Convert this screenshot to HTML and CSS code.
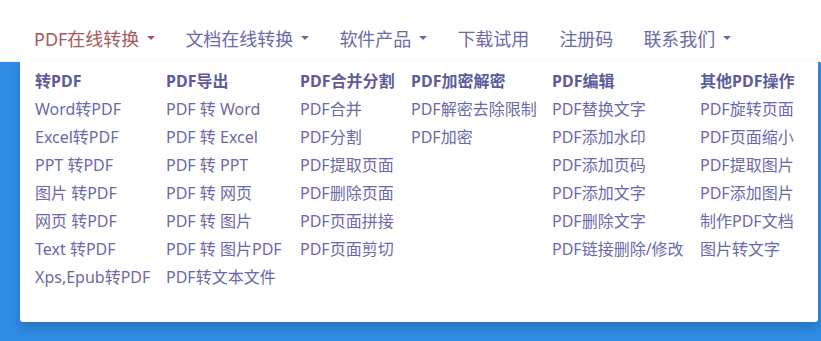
FILE: index.html
```html
<!DOCTYPE html>
<html lang="zh-CN">
<head>
    <meta charset="UTF-8">
    <meta name="viewport" content="width=device-width, initial-scale=1.0">
    <title>PDF在线转换</title>
    <link rel="stylesheet" href="styles.css">
</head>
<body>
    <header class="navbar">
        <ul class="nav">
            <li class="nav-item active open">
                <a href="#">PDF在线转换<span class="caret"></span></a>
                <div class="mega-menu">
                    <ul class="menu-col">
                        <li class="menu-head">转PDF</li>
                        <li><a href="#">Word转PDF</a></li>
                        <li><a href="#">Excel转PDF</a></li>
                        <li><a href="#">PPT 转PDF</a></li>
                        <li><a href="#">图片 转PDF</a></li>
                        <li><a href="#">网页 转PDF</a></li>
                        <li><a href="#">Text 转PDF</a></li>
                        <li><a href="#">Xps,Epub转PDF</a></li>
                    </ul>
                    <ul class="menu-col">
                        <li class="menu-head">PDF导出</li>
                        <li><a href="#">PDF 转 Word</a></li>
                        <li><a href="#">PDF 转 Excel</a></li>
                        <li><a href="#">PDF 转 PPT</a></li>
                        <li><a href="#">PDF 转 网页</a></li>
                        <li><a href="#">PDF 转 图片</a></li>
                        <li><a href="#">PDF 转 图片PDF</a></li>
                        <li><a href="#">PDF转文本文件</a></li>
                    </ul>
                    <ul class="menu-col">
                        <li class="menu-head">PDF合并分割</li>
                        <li><a href="#">PDF合并</a></li>
                        <li><a href="#">PDF分割</a></li>
                        <li><a href="#">PDF提取页面</a></li>
                        <li><a href="#">PDF删除页面</a></li>
                        <li><a href="#">PDF页面拼接</a></li>
                        <li><a href="#">PDF页面剪切</a></li>
                    </ul>
                    <ul class="menu-col">
                        <li class="menu-head">PDF加密解密</li>
                        <li><a href="#">PDF解密去除限制</a></li>
                        <li><a href="#">PDF加密</a></li>
                    </ul>
                    <ul class="menu-col">
                        <li class="menu-head">PDF编辑</li>
                        <li><a href="#">PDF替换文字</a></li>
                        <li><a href="#">PDF添加水印</a></li>
                        <li><a href="#">PDF添加页码</a></li>
                        <li><a href="#">PDF添加文字</a></li>
                        <li><a href="#">PDF删除文字</a></li>
                        <li><a href="#">PDF链接删除/修改</a></li>
                    </ul>
                    <ul class="menu-col">
                        <li class="menu-head">其他PDF操作</li>
                        <li><a href="#">PDF旋转页面</a></li>
                        <li><a href="#">PDF页面缩小</a></li>
                        <li><a href="#">PDF提取图片</a></li>
                        <li><a href="#">PDF添加图片</a></li>
                        <li><a href="#">制作PDF文档</a></li>
                        <li><a href="#">图片转文字</a></li>
                    </ul>
                </div>
            </li>
            <li class="nav-item"><a href="#">文档在线转换<span class="caret"></span></a></li>
            <li class="nav-item"><a href="#">软件产品<span class="caret"></span></a></li>
            <li class="nav-item"><a href="#">下载试用</a></li>
            <li class="nav-item"><a href="#">注册码</a></li>
            <li class="nav-item"><a href="#">联系我们<span class="caret"></span></a></li>
        </ul>
    </header>

    <section class="hero"></section>
</body>
</html>
```

FILE: styles.css
```css
:root {
    --link: #6a6aa9;
    --head: #5c5c9c;
    --active: #a55b5b;
    --hero: #2f8ce5;
}

* {
    margin: 0;
    padding: 0;
    box-sizing: border-box;
    font-family: "Noto Sans", "Noto Sans CJK SC", sans-serif;
}

ul {
    list-style: none;
}

a {
    text-decoration: none;
    color: inherit;
}

body {
    background: var(--hero);
    min-height: 100vh;
}

.navbar {
    background: #fff;
    height: 62px;
    padding-left: 19px;
    border-bottom: 1px solid #f3f3f3;
}

.nav {
    display: flex;
    height: 100%;
    position: relative;
}

.nav-item > a {
    display: flex;
    align-items: center;
    height: 62px;
    padding: 13px 15px 0;
    font-size: 18px;
    color: var(--link);
}

.nav-item.active > a {
    color: var(--active);
}

.caret {
    display: inline-block;
    width: 0;
    height: 0;
    margin-left: 8px;
    border-top: 4px solid;
    border-left: 4px solid transparent;
    border-right: 4px solid transparent;
}

.mega-menu {
    position: absolute;
    top: 61px;
    left: 1px;
    width: 798px;
    height: 261px;
    background: #fff;
    border-radius: 0 0 3px 3px;
    box-shadow: 0 6px 12px rgba(0, 0, 0, 0.175);
    padding: 6px 0 0 15px;
    display: grid;
    grid-template-columns: 131px 134px 111px 141px 148px 1fr;
}

.menu-col li {
    height: 28px;
    line-height: 28px;
    font-size: 16px;
    color: var(--link);
    white-space: nowrap;
}

.menu-col .menu-head {
    font-weight: bold;
    color: var(--head);
}

.hero {
    height: 279px;
}
```
